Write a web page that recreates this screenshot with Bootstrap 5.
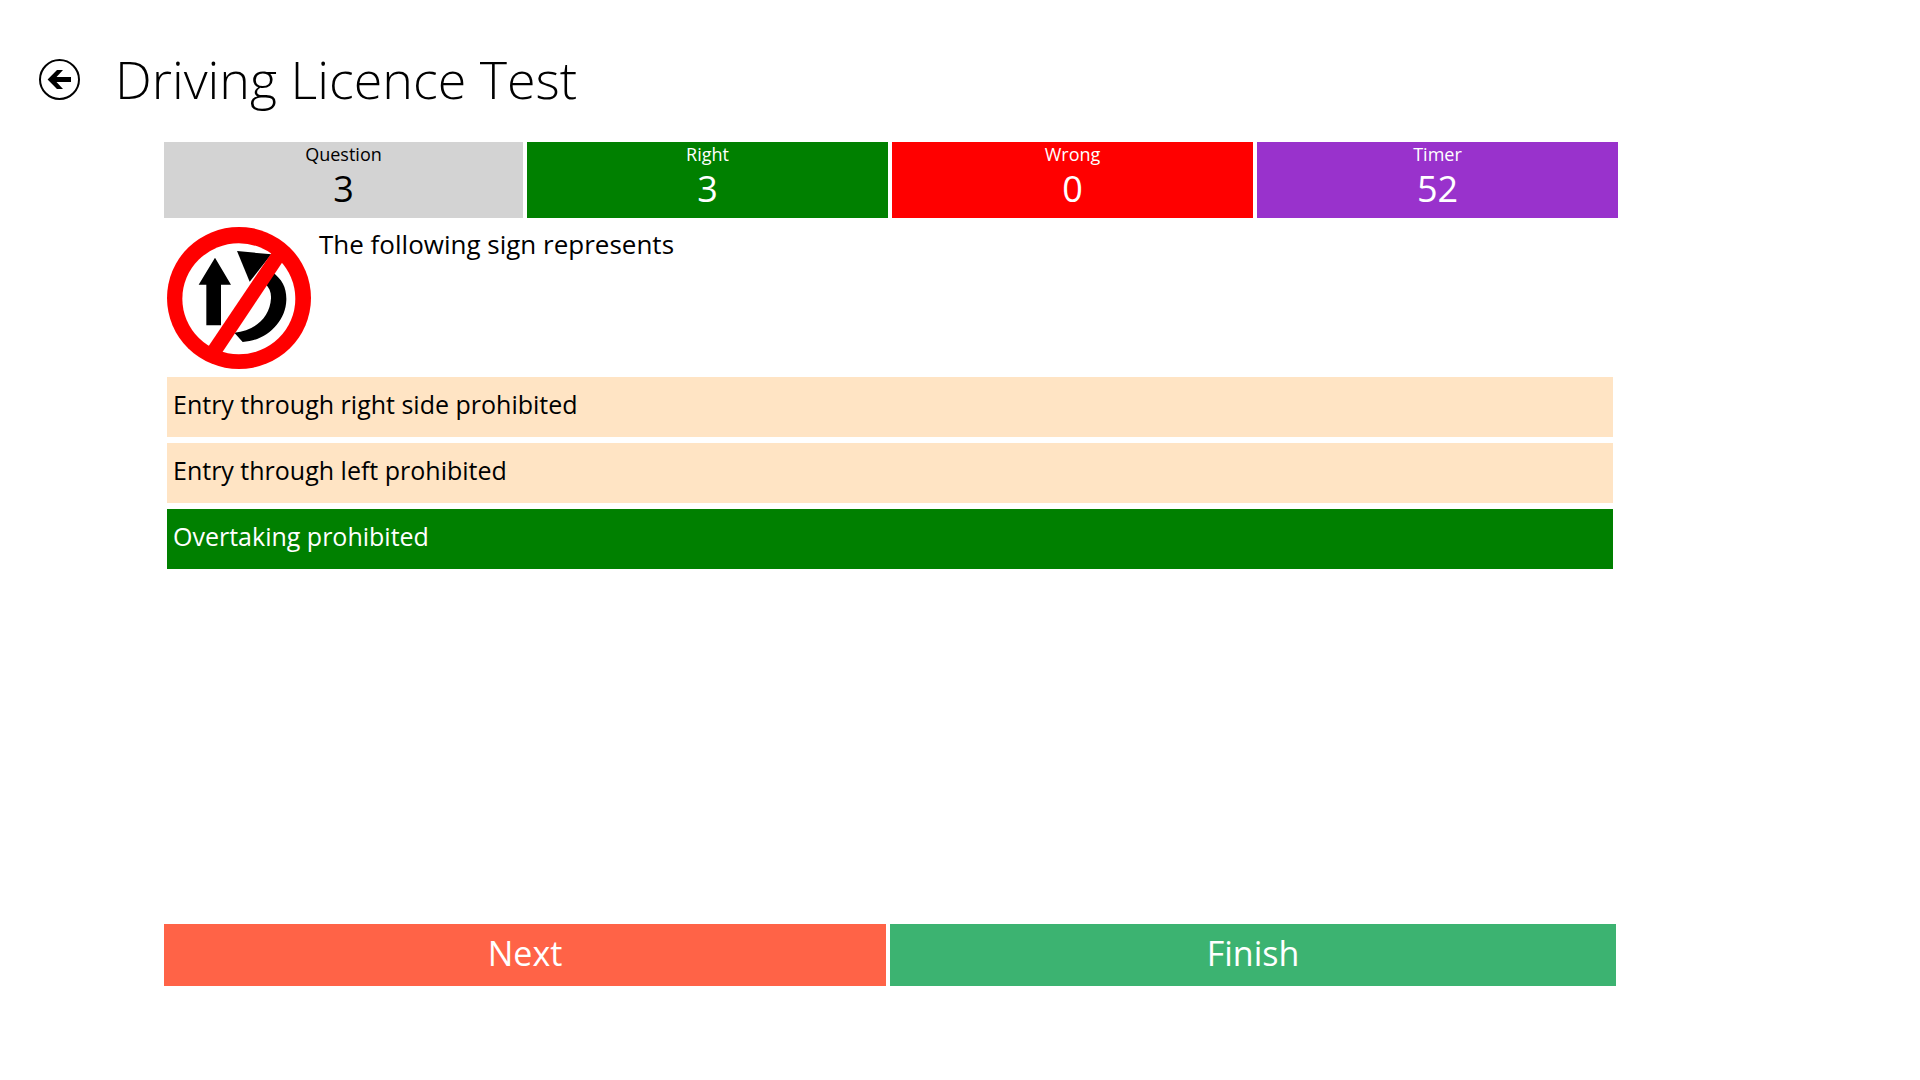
<!DOCTYPE html>
<html lang="en">
<head>
<meta charset="utf-8">
<meta name="viewport" content="width=device-width, initial-scale=1">
<title>Driving Licence Test</title>
<link href="https://cdn.jsdelivr.net/npm/bootstrap@5.3.0/dist/css/bootstrap.min.css" rel="stylesheet">
<style>
  body { font-family: "Open Sans", "Noto Sans", sans-serif; color: #000; background: #fff; }
  .page-head { padding: 43px 39px 0; gap: 35px; margin-bottom: 27px; }
  .page-title { font-size: 52px; line-height: 72px; font-weight: 300; }
  .back-btn { line-height: 0; color: #000; }
  .quiz { margin: 0 302px 94px 164px; }
  .tiles { grid-template-columns: 359fr 361fr 361fr 361fr; gap: 4px; }
  .tile { padding-bottom: 6px; color: #fff; }
  .tile dt { font-size: 18px; line-height: 24px; font-weight: 400; }
  .tile dd { font-size: 36px; line-height: 46px; font-weight: 400; }
  .tile-question { background: #d3d3d3; color: #000; }
  .tile-right { background: #008000; }
  .tile-wrong { background: #f00; }
  .tile-timer { background: #9932cc; }
  .prompt { gap: 8px; padding: 9px 3px 8px; }
  .prompt-text { font-size: 26px; line-height: 34px; }
  .answers { gap: 6px; padding: 0 5px 0 3px; }
  .answer { font-size: 25px; line-height: 54px; padding: 0 6px 6px; background: #ffe4c4; color: #000; }
  .answer:hover { background: #ffd9ac; color: #000; }
  .answer-correct, .answer-correct:hover { background: #008000; color: #fff; }
  .actions { grid-template-columns: 361fr 363fr; gap: 4px; padding-right: 2px; }
  .action { font-size: 34px; line-height: 58px; padding: 0 0 4px; color: #fff; }
  .action:hover { color: #fff; filter: brightness(.95); }
  .action-next, .action-next:hover { background: #ff6347; }
  .action-finish, .action-finish:hover { background: #3cb371; }
</style>
<script src="https://cdn.jsdelivr.net/npm/bootstrap@5.3.0/dist/js/bootstrap.bundle.min.js" defer></script>
</head>
<body class="d-flex flex-column min-vh-100">
<header class="page-head d-flex align-items-center">
  <button type="button" class="btn back-btn p-0 border-0 rounded-circle" aria-label="Back">
    <svg width="41" height="41" viewBox="0 0 41 41" aria-hidden="true">
      <circle cx="20.5" cy="20.5" r="19.5" fill="none" stroke="currentColor" stroke-width="2"/>
      <path d="M8.6 20.5 18 11h6l-6.5 7H32v5H17.5l6.500 7H18z" fill="currentColor"/>
    </svg>
  </button>
  <h1 class="page-title m-0">Driving Licence Test</h1>
</header>

<main class="quiz d-flex flex-column flex-grow-1">
  <dl class="tiles d-grid m-0 text-center">
    <div class="tile tile-question"><dt>Question</dt><dd class="m-0">3</dd></div>
    <div class="tile tile-right"><dt>Right</dt><dd class="m-0">3</dd></div>
    <div class="tile tile-wrong"><dt>Wrong</dt><dd class="m-0">0</dd></div>
    <div class="tile tile-timer"><dt>Timer</dt><dd class="m-0">52</dd></div>
  </dl>

  <section class="prompt d-flex align-items-start">
    <svg class="flex-shrink-0" width="144" height="142" viewBox="36 36 432 426" role="img" aria-label="Road sign">
      <ellipse cx="252" cy="249" rx="216" ry="213" fill="#f00"/>
      <ellipse cx="251.500" cy="251.500" rx="169.500" ry="166.500" fill="#fff"/>
      <path d="M180 128 228 209H198V331H154V209H131z"/>
      <path d="M246 108 349 118 284 200z"/>
      <path d="M352 172C382 193 395 219 394 255C392 323 331 378 263 381L238 353C300 347 345 308 348 250C349 232 343 218 331 207z"/>
      <path d="M352 110 385 137 198 418 157 399z" fill="#f00"/>
    </svg>
    <p class="prompt-text m-0">The following sign represents</p>
  </section>

  <div class="answers d-flex flex-column" role="group" aria-label="Answers">
    <button type="button" class="btn answer border-0 rounded-0 text-start">Entry through right side prohibited</button>
    <button type="button" class="btn answer border-0 rounded-0 text-start">Entry through left prohibited</button>
    <button type="button" class="btn answer answer-correct border-0 rounded-0 text-start">Overtaking prohibited</button>
  </div>

  <div class="actions d-grid mt-auto">
    <button type="button" class="btn action action-next border-0 rounded-0">Next</button>
    <button type="button" class="btn action action-finish border-0 rounded-0">Finish</button>
  </div>
</main>
</body>
</html>
